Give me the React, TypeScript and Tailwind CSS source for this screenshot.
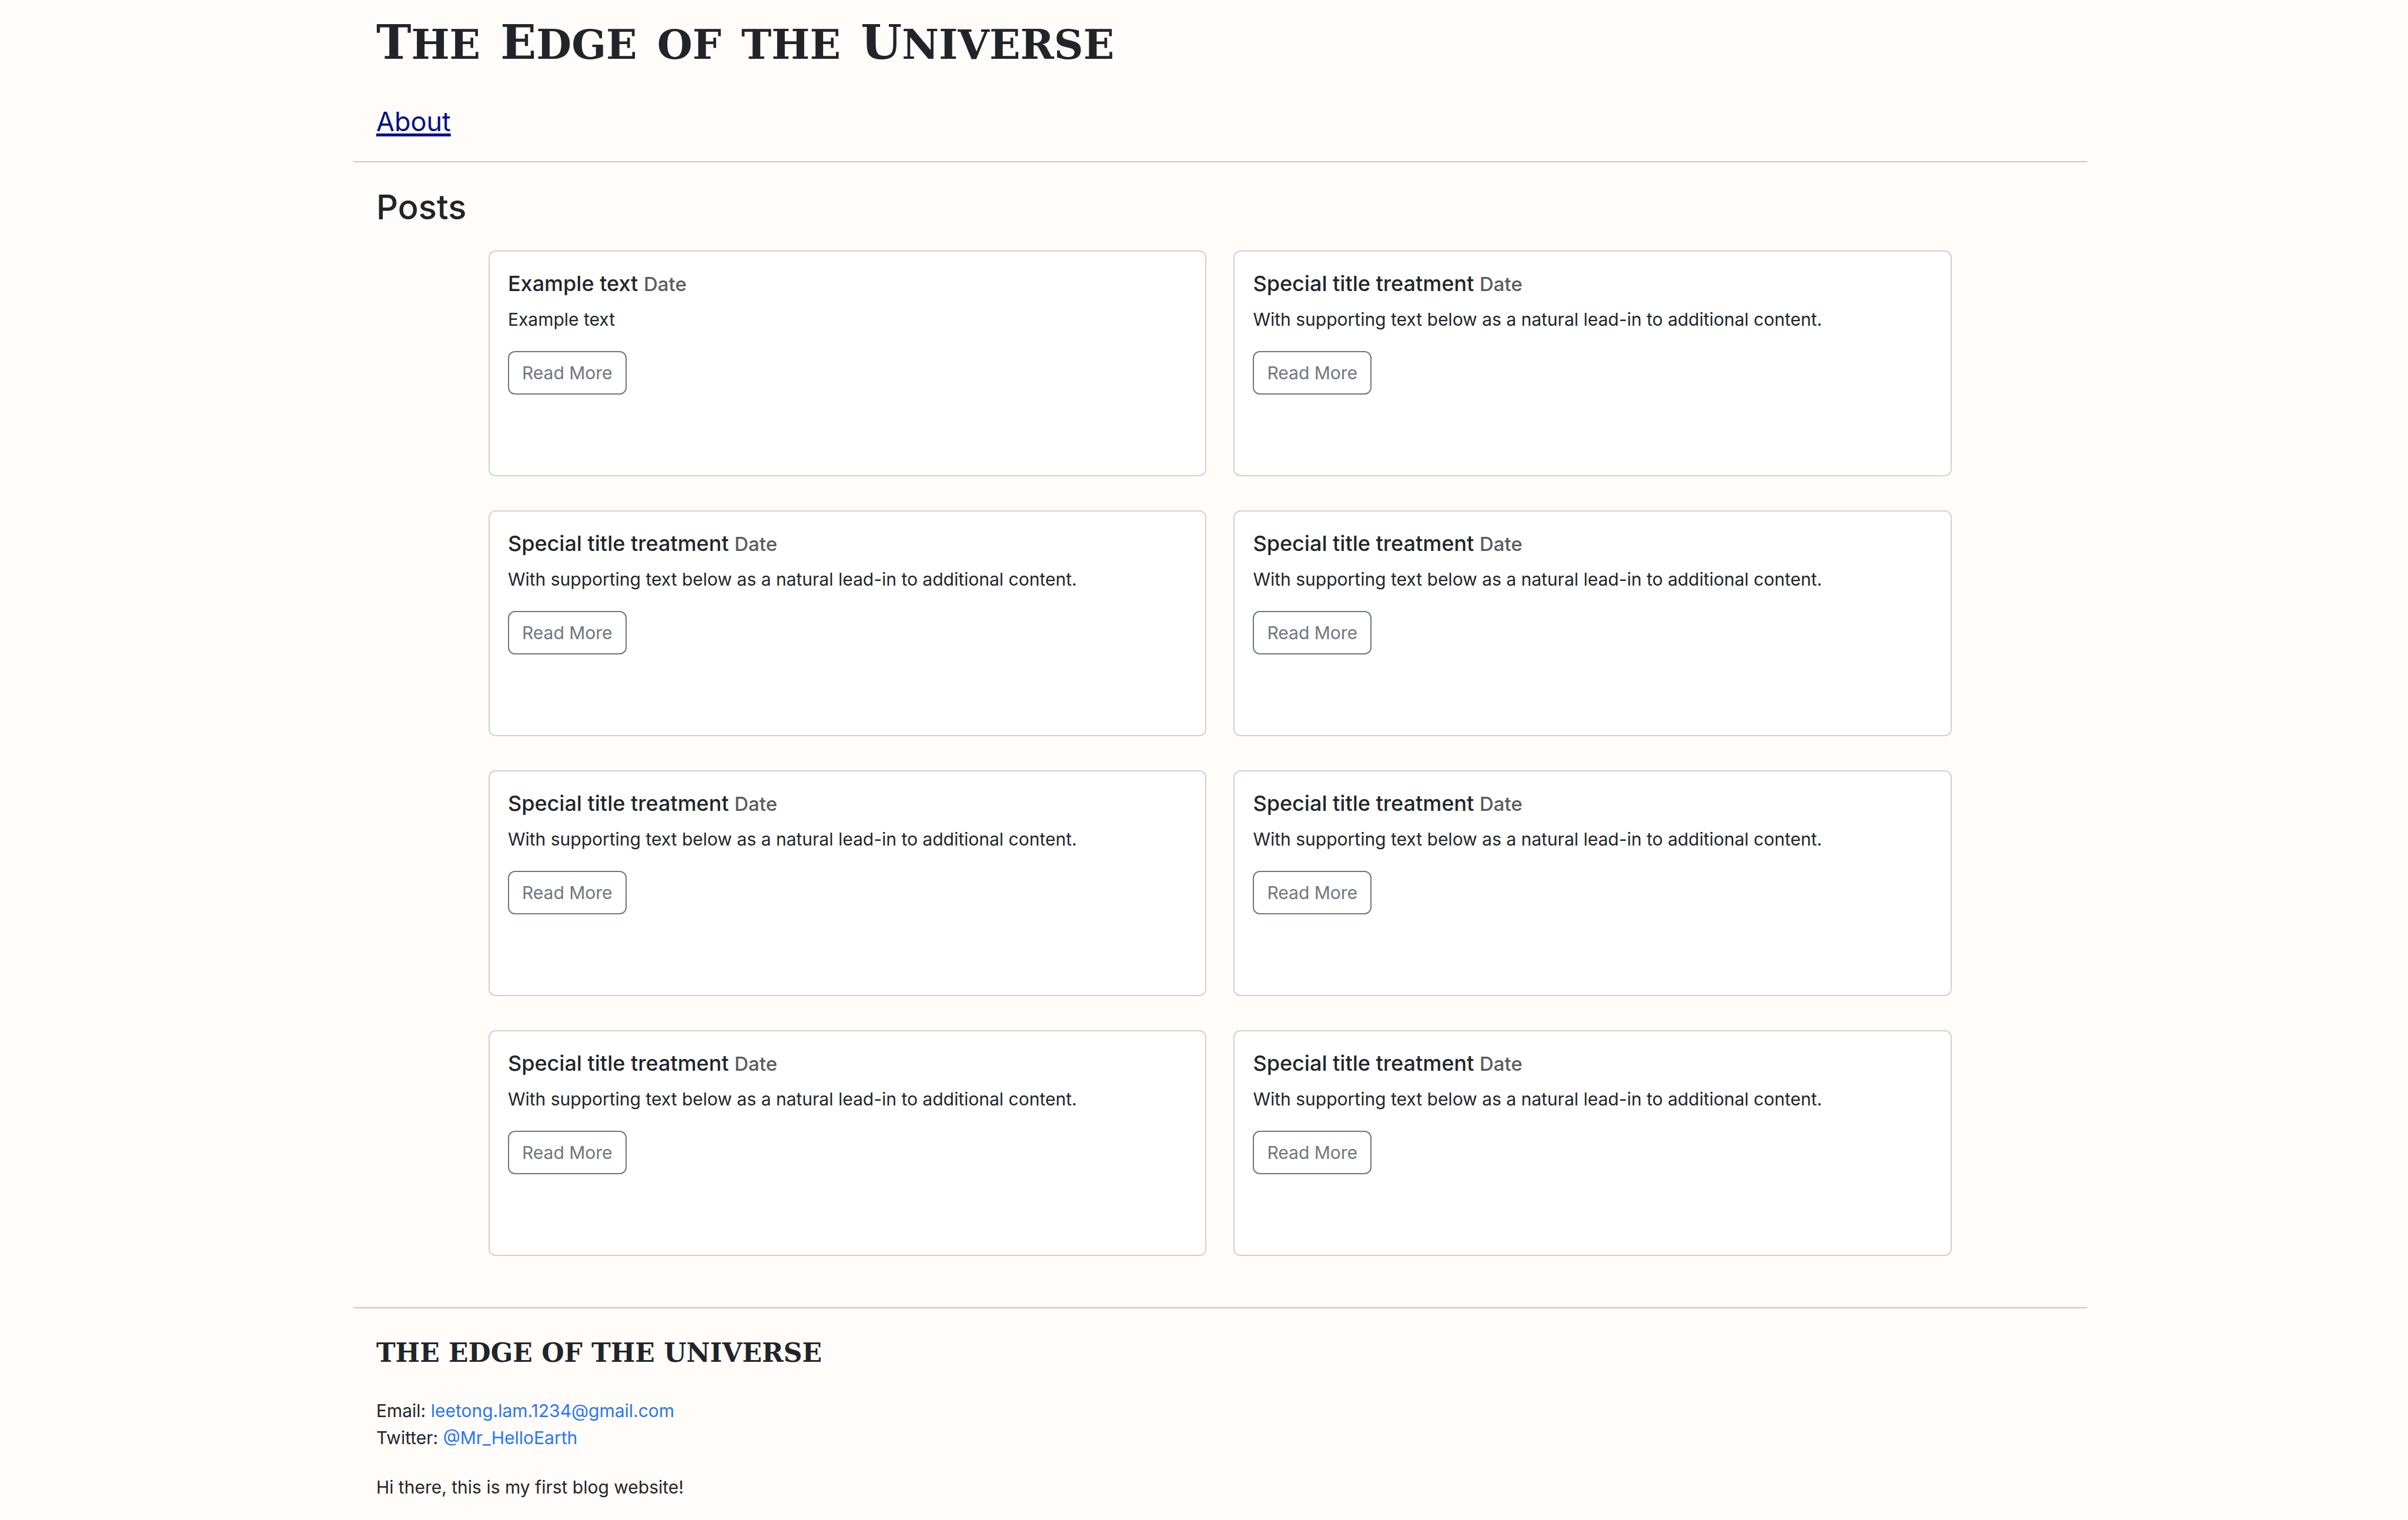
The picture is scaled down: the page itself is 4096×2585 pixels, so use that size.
const supporting = 'With supporting text below as a natural lead-in to additional content.';

const posts = [
  { title: 'Example text', date: 'Date', text: 'Example text' },
  ...Array.from({ length: 7 }, () => ({
    title: 'Special title treatment',
    date: 'Date',
    text: supporting,
  })),
];

type Post = (typeof posts)[number];

function PostCard({ title, date, text }: Post) {
  return (
    <article className="min-h-[384px] rounded-[12px] border-2 border-[#d1d1d1] bg-white p-[31px]">
      <h5 className="mb-[15px] text-[36px] leading-[46px] font-medium">
        {title} <small className="text-[33px] leading-none text-[#5b5c60]">{date}</small>
      </h5>
      <p className="mb-[31px] text-[30px] leading-[46px]">{text}</p>
      <button
        type="button"
        className="rounded-[12px] border-2 border-[#6f7680] px-[22px] py-[12px] text-[30px] leading-[46px] text-[#6f7680]"
      >
        Read More
      </button>
    </article>
  );
}

function Initial({ children }: { children: string }) {
  return <span className="text-[80px] leading-none">{children}</span>;
}

export default function App() {
  return (
    <div className="min-h-screen bg-[#fffcfa] font-['Inter',sans-serif] text-[#212529]">
      <div className="mr-[13.33%] ml-[14.67%]">
        <header className="border-b-2 border-[#c7c7c6] px-[39px] pt-[18px] pb-[35px]">
          <h1 className="mb-[61px] font-['DejaVu_Serif',serif] text-[98px] leading-[96px] font-bold whitespace-nowrap [font-variant-caps:small-caps]">
            <Initial>T</Initial>he <Initial>E</Initial>dge of the <Initial>U</Initial>niverse
          </h1>
          <nav className="text-[45px] leading-[64px]">
            <a href="#about" className="text-[#00118a] underline decoration-[5px] underline-offset-[4px]">
              About
            </a>
          </nav>
        </header>

        <main className="border-b-2 border-[#c7c7c6] pt-[39px] pb-[87px]">
          <h2 className="mb-[37px] px-[39px] text-[58px] leading-[74px] font-medium">Posts</h2>
          <div className="grid grid-cols-2 gap-x-[46px] gap-y-[58px] px-[7.8%]">
            {posts.map((post, i) => (
              <PostCard key={i} {...post} />
            ))}
          </div>
        </main>

        <footer className="px-[39px] pt-[48px] pb-[31px] text-[30px] leading-[46px]">
          <h4 className="mb-[47px] font-['DejaVu_Serif',serif] text-[44px] leading-[56px] font-bold whitespace-nowrap">
            THE EDGE OF THE UNIVERSE
          </h4>
          <p>
            Email:{' '}
            <a href="mailto:leetong.lam.1234@gmail.com" className="text-[#2876f7]">
              leetong.lam.1234@gmail.com
            </a>
          </p>
          <p>
            Twitter:{' '}
            <a href="#twitter" className="text-[#2876f7]">
              @Mr_HelloEarth
            </a>
          </p>
          <p className="mt-[38px]">Hi there, this is my first blog website!</p>
        </footer>
      </div>
    </div>
  );
}
